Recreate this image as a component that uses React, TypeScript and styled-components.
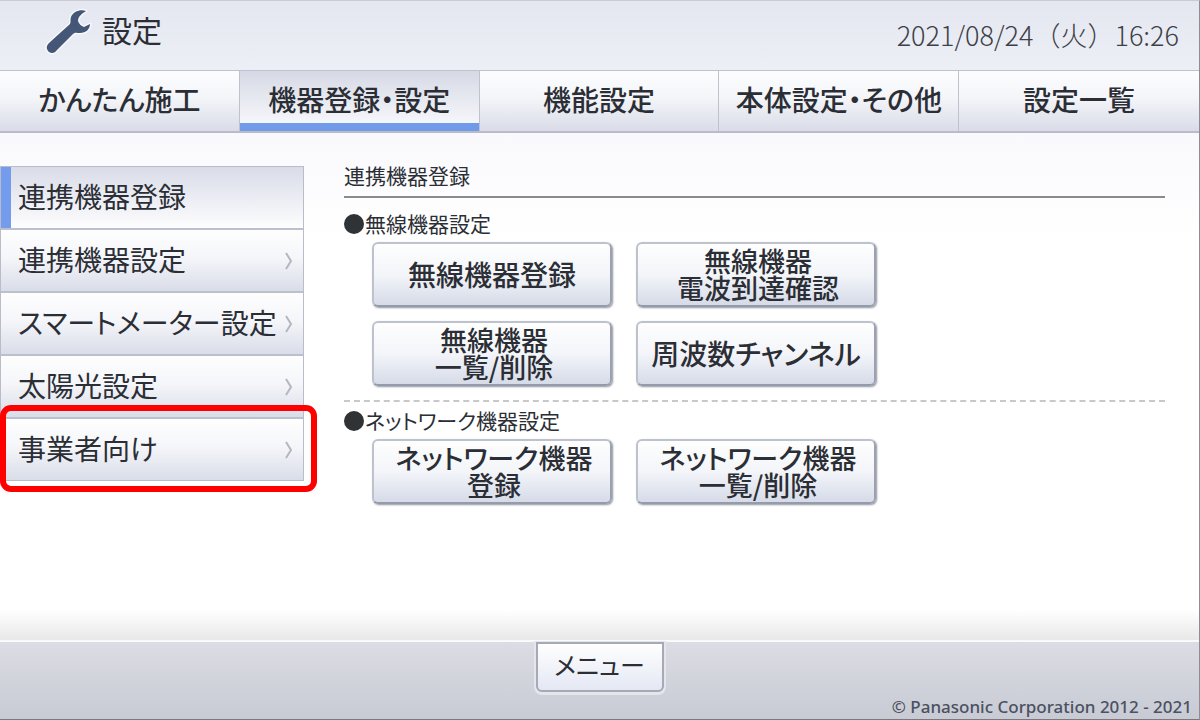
import React from "react";
import styled, { createGlobalStyle, css } from "styled-components";

const GlobalStyle = createGlobalStyle`
  *, *::before, *::after { box-sizing: border-box; }
  body {
    margin: 0;
    color: #2b2e35;
    background: #fff;
    font-family: "Noto Sans CJK JP", sans-serif;
    font-feature-settings: "palt";
  }
  button { font: inherit; font-feature-settings: inherit; color: inherit; cursor: pointer; }
`;

const Screen = styled.div`
  display: flex;
  flex-direction: column;
  min-height: 100vh;
  border: 1px solid #c9cbd1;
  border-left: 0;
  border-right-color: #8c8e94;
  border-bottom-color: #77797f;
  background: linear-gradient(#f9f9fd 130px, #fff 240px);
`;

const Header = styled.header`
  display: flex;
  align-items: center;
  justify-content: space-between;
  height: 69px;
  padding: 0 20px 8px 44px;
  background: linear-gradient(#e4e7ef, #edeff7);
`;

const Title = styled.h1`
  display: flex;
  align-items: center;
  gap: 8px;
  margin: 0;
  font-size: 30px;
  font-weight: 400;
  line-height: 40px;
`;

const TitleText = styled.span`
  padding-bottom: 6px;
`;

const Clock = styled.time`
  padding-top: 6px;
  font-size: 27px;
  font-weight: 300;
  font-feature-settings: normal;
  line-height: 40px;
  color: #3d4046;
`;

const Tabs = styled.nav`
  display: grid;
  grid-template-columns: repeat(5, 1fr);
  height: 63px;
  border-top: 1px solid #bfc2ca;
  border-bottom: 2px solid #b9bcc8;
`;

const Tab = styled.button<{ $active?: boolean }>`
  padding: 0 0 4px;
  border: 0;
  border-right: 1px solid #bfc2cd;
  font-size: 28px;
  font-weight: 500;
  line-height: 40px;
  white-space: nowrap;
  background: linear-gradient(#fcfdfe, #f4f5f9 45%, #d9dce8);
  &:last-child { border-right: 0; }
  ${(p) => p.$active && css`
    background: linear-gradient(#d6d9e5, #fafbfd);
    box-shadow: inset 0 -8px #6f9be8;
  `}
`;

const Body = styled.div`
  display: grid;
  grid-template-columns: 304px 1fr;
  column-gap: 40px;
  flex: 1;
  padding: 33px 34px 32px 0;
`;

const SideMenu = styled.ul`
  align-self: start;
  margin: 0;
  padding: 0;
  list-style: none;
  border: 1px solid #b9bdc9;
`;

const SideItem = styled.li<{ $marked?: boolean }>`
  position: relative;
  & + & { border-top: 2px solid #bcc0cc; }
  ${(p) => p.$marked && css`
    &::after {
      content: "";
      position: absolute;
      inset: -14px -14px -12px -1px;
      border: 6px solid #fe0000;
      border-radius: 11px;
      pointer-events: none;
    }
  `}
`;

const SideButton = styled.button<{ $active?: boolean }>`
  display: flex;
  align-items: center;
  justify-content: space-between;
  width: 100%;
  height: 61px;
  padding: 0 8px 0 17px;
  border: 0;
  font-size: 28px;
  font-weight: 400;
  line-height: 40px;
  white-space: nowrap;
  background: linear-gradient(#fefefe, #f5f6fa 45%, #d9dde8);
  ${(p) => p.$active && css`
    background: linear-gradient(#d9dce8, #fdfdfe);
    box-shadow: inset 10px 0 #739bee;
  `}
`;

const SideLabel = styled.span`
  padding-bottom: 4px;
`;

const Content = styled.main`
  min-width: 0;
`;

const PageTitle = styled.h2`
  margin: 0;
  padding-bottom: 12px;
  border-bottom: 2px solid #898b8f;
  font-size: 21px;
  font-weight: 400;
  line-height: 18px;
`;

const Section = styled.section`
  padding: 13px 0 14px;
  & + & {
    padding-top: 6px;
    border-top: 2px dashed #c8c8c8;
  }
`;

const SectionTitle = styled.h3`
  display: flex;
  align-items: center;
  gap: 1px;
  margin: 0 0 5px;
  font-size: 21px;
  font-weight: 400;
  line-height: 24px;
  &::before {
    content: "";
    width: 20px;
    height: 20px;
    border-radius: 50%;
    background: #303336;
  }
`;

const SectionLabel = styled.span`
  padding-bottom: 2px;
`;

const ButtonGrid = styled.div`
  display: grid;
  grid-template-columns: repeat(2, 240px);
  gap: 14px 24px;
  padding-left: 28px;
`;

const ActionButton = styled.button<{ $twoLine?: boolean }>`
  height: 65px;
  padding: ${(p) => (p.$twoLine ? "0 0 2px 4px" : "0 0 2px")};
  border: 2px solid #bec2cd;
  border-right-color: #9ba1af;
  border-bottom-color: #959bab;
  border-radius: 6px;
  font-size: ${(p) => (p.$twoLine ? 27 : 28)}px;
  font-weight: 500;
  line-height: ${(p) => (p.$twoLine ? 27 : 40)}px;
  white-space: pre-line;
  background: linear-gradient(#fefefe, #f3f5f9 50%, #d6dbe8);
  box-shadow: 1px 1px 2px #8f95a2;
`;

const Footer = styled.footer`
  position: relative;
  display: flex;
  justify-content: center;
  align-items: flex-start;
  height: 79px;
  border-top: 2px solid #fafafa;
  background: linear-gradient(#dbdce4, #c8cbd4);
  &::before {
    content: "";
    position: absolute;
    inset: -32px 0 auto;
    height: 30px;
    background: linear-gradient(#fff, #e8e8e8);
  }
`;

const MenuButton = styled.button`
  width: 128px;
  height: 50px;
  padding: 0 0 6px;
  border: 2px solid #a6aab4;
  border-radius: 0 0 6px 6px;
  font-size: 25px;
  font-weight: 400;
  line-height: 40px;
  background: linear-gradient(#fff, #e4e8f3);
  box-shadow: 0 1px 0 2px #e4e6ec;
`;

const Copyright = styled.small`
  position: absolute;
  right: 7px;
  bottom: 0;
  font-family: "Noto Sans", sans-serif;
  font-size: 17px;
  font-weight: 500;
  line-height: 24px;
  color: #4b5161;
`;

const tabs = ["かんたん施工", "機器登録・設定", "機能設定", "本体設定・その他", "設定一覧"];
const sideItems = ["連携機器登録", "連携機器設定", "スマートメーター設定", "太陽光設定", "事業者向け"];
const sections = [
  { title: "無線機器設定", actions: ["無線機器登録", "無線機器\n電波到達確認", "無線機器\n一覧/削除", "周波数チャンネル"] },
  { title: "ネットワーク機器設定", actions: ["ネットワーク機器\n登録", "ネットワーク機器\n一覧/削除"] },
];

const Wrench = () => (
  <svg width="50" height="50" viewBox="0 0 50 50" aria-hidden="true">
    <path
      d="M42 4C36 2 29 5 27 10C26 13 27 15 26 17L5 36C2 39 2 42 5 45C8 47 11 46 13 43L29 27C31 25 33 26 36 26C42 26 46 22 46 17L40 20C37 19 35 17 34 14C34 10 37 7 42 4Z"
      fill="#445777" stroke="#f7f8fc" strokeWidth="3" strokeLinejoin="round" paintOrder="stroke"
    />
  </svg>
);

const Chevron = () => (
  <svg width="12" height="20" viewBox="0 0 12 20" fill="none" aria-hidden="true">
    <path d="M3 2L8 10L3 18" stroke="#b4b7be" strokeWidth="2" />
  </svg>
);

export default function App() {
  return (
    <Screen>
      <GlobalStyle />
      <Header>
        <Title><Wrench /><TitleText>設定</TitleText></Title>
        <Clock dateTime="2021-08-24T16:26">2021/08/24（火）16:26</Clock>
      </Header>
      <Tabs>
        {tabs.map((t, i) => <Tab key={t} $active={i === 1}>{t}</Tab>)}
      </Tabs>
      <Body>
        <SideMenu>
          {sideItems.map((t, i) => (
            <SideItem key={t} $marked={i === 4}>
              <SideButton $active={i === 0}>
                <SideLabel>{t}</SideLabel>
                {i > 0 && <Chevron />}
              </SideButton>
            </SideItem>
          ))}
        </SideMenu>
        <Content>
          <PageTitle>連携機器登録</PageTitle>
          {sections.map((s) => (
            <Section key={s.title}>
              <SectionTitle><SectionLabel>{s.title}</SectionLabel></SectionTitle>
              <ButtonGrid>
                {s.actions.map((a) => (
                  <ActionButton key={a} $twoLine={a.includes("\n")}>{a}</ActionButton>
                ))}
              </ButtonGrid>
            </Section>
          ))}
        </Content>
      </Body>
      <Footer>
        <MenuButton>メニュー</MenuButton>
        <Copyright>© Panasonic Corporation 2012 - 2021</Copyright>
      </Footer>
    </Screen>
  );
}
